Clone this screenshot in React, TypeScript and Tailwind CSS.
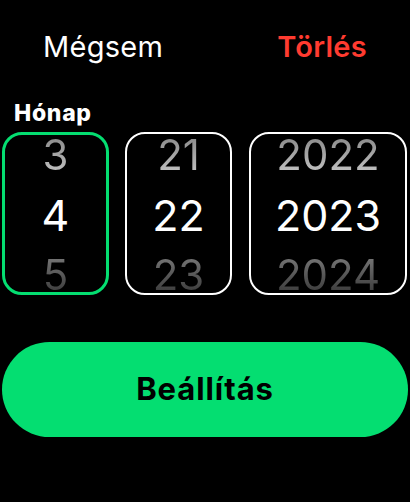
import React from 'react';

const font = { fontFamily: 'Inter, "Noto Sans", sans-serif' };

interface WheelProps {
  values: [string, string, string];
  active?: boolean;
  width: string;
}

function Wheel({ values, active, width }: WheelProps) {
  return (
    <div
      className={`${width} h-[163px] shrink-0 overflow-hidden rounded-[20px] flex flex-col items-center justify-center pt-[3px] ${
        active ? 'border-[3px] border-[#04de71]' : 'border-2 border-white'
      }`}
    >
      <div className="h-[60px] leading-[60px] text-[42px] bg-gradient-to-b from-[#7a7a7a] to-[#d4d4d4] bg-clip-text text-transparent">
        {values[0]}
      </div>
      <div className="h-[60px] leading-[60px] text-[43px] text-white">{values[1]}</div>
      <div className="h-[60px] leading-[60px] text-[42px] bg-gradient-to-b from-[#8a8a8a] to-[#2a2a2a] bg-clip-text text-transparent">
        {values[2]}
      </div>
    </div>
  );
}

export default function App() {
  return (
    <div className="w-[410px] h-[502px] bg-black flex flex-col pt-[30px]" style={font}>
      {/* felső gombok */}
      <div className="flex justify-between px-[43px] h-[34px] leading-[34px] text-[29px] tracking-[0.01em]">
        <span className="text-white">Mégsem</span>
        <span className="text-[#ff3b30] font-semibold">Törlés</span>
      </div>

      <div className="mt-[36px] ml-[14px] h-[26px] leading-[26px] text-[23px] font-extrabold tracking-[0.03em] text-white">
        Hónap
      </div>

      {/* választók */}
      <div className="mt-[6px] ml-[2px] flex">
        <Wheel values={['3', '4', '5']} active width="w-[107px]" />
        <div className="ml-[16px]">
          <Wheel values={['21', '22', '23']} width="w-[107px]" />
        </div>
        <div className="ml-[17px]">
          <Wheel values={['2022', '2023', '2024']} width="w-[158px]" />
        </div>
      </div>

      <button className="mt-[47px] mx-[2px] h-[95px] rounded-full bg-[#04de71] text-black text-[31px] font-bold tracking-[0.03em]">
        Beállítás
      </button>
    </div>
  );
}
